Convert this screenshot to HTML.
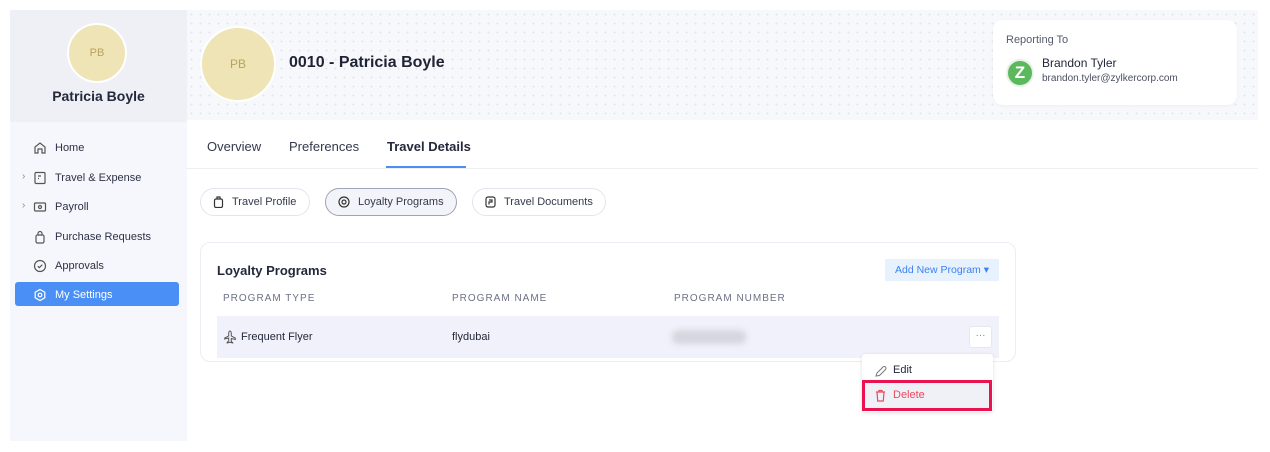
<!DOCTYPE html>
<html><head><meta charset="utf-8"><style>
*{box-sizing:border-box;margin:0;padding:0}
body{width:1270px;height:452px;background:#fff;font-family:"Liberation Sans",sans-serif;position:relative;overflow:hidden;color:#23283a}
.a{position:absolute}
.side{left:10px;top:10px;width:177px;height:431px;background:#f6f7fc}
.shead{left:10px;top:10px;width:177px;height:112px;background:#eff0f6}
.hdr{left:187px;top:10px;width:1071px;height:110px;background-color:#f7f8fb;background-image:radial-gradient(#e3e5ec 0.8px,transparent 1px);background-size:9px 9px}
.av{border-radius:50%;background:#efe4b6;border:2px solid #fff;color:#b9a35c;display:flex;align-items:center;justify-content:center;font-size:11px}
.nav{left:33px;font-size:11px;color:#2c3145;display:flex;align-items:center;gap:8px}
.nav svg{width:14px;height:14px}
.chev{left:22px;font-size:10px;color:#888}
.tab{top:139px;font-size:13px;color:#333a4d}
.chip{top:188px;height:28px;border:1px solid #e3e5ee;border-radius:14px;display:flex;align-items:center;padding-left:12px;gap:8px;font-size:11px;color:#333a4d;background:#fff}
.th{top:293px;font-size:10px;letter-spacing:1px;color:#6b7085}
</style></head><body>
<div class="a side"></div><div class="a shead"></div>
<div class="a av" style="left:67px;top:23px;width:60px;height:60px">PB</div>
<div class="a" style="left:10px;width:177px;top:88px;text-align:center;font-size:14px;font-weight:bold;color:#23283a">Patricia Boyle</div>
<div class="a nav" style="top:141px"><svg viewBox="0 0 14 14" fill="none" stroke="#555" stroke-width="1.2"><path d="M2 12V6l5-4 5 4v6H9V8H5v4z"/></svg>Home</div>
<div class="a chev" style="top:171px">›</div>
<div class="a nav" style="top:171px"><svg viewBox="0 0 14 14" fill="none" stroke="#555" stroke-width="1.2"><rect x="2" y="1.5" width="10" height="11" rx="1"/><path d="M5 5h3M5 7.5h1"/></svg>Travel &amp; Expense</div>
<div class="a chev" style="top:200px">›</div>
<div class="a nav" style="top:200px"><svg viewBox="0 0 14 14" fill="none" stroke="#555" stroke-width="1.2"><rect x="1.5" y="3" width="11" height="8" rx="1"/><circle cx="7" cy="7" r="1.5"/></svg>Payroll</div>
<div class="a nav" style="top:230px"><svg viewBox="0 0 14 14" fill="none" stroke="#555" stroke-width="1.2"><rect x="3" y="5" width="8" height="8" rx="1.5"/><path d="M5 5V3.5a2 2 0 0 1 4 0V5"/></svg>Purchase Requests</div>
<div class="a nav" style="top:259px"><svg viewBox="0 0 14 14" fill="none" stroke="#555" stroke-width="1.2"><circle cx="7" cy="7" r="5.5"/><path d="M4.8 7.2l1.5 1.5 3-3"/></svg>Approvals</div>
<div class="a" style="left:15px;top:282px;width:164px;height:24px;background:#4a8ff5;border-radius:3px"></div>
<div class="a nav" style="top:288px;color:#fff"><svg viewBox="0 0 14 14" fill="none" stroke="#fff" stroke-width="1.2"><path d="M7 1.5l4.8 2.75v5.5L7 12.5 2.2 9.75v-5.5z"/><circle cx="7" cy="7" r="1.8"/></svg>My Settings</div>

<div class="a hdr"></div>
<div class="a av" style="left:200px;top:26px;width:76px;height:76px;font-size:12px">PB</div>
<div class="a" style="left:289px;top:54px;font-size:16px;font-weight:bold;color:#1f2333">0010 - Patricia Boyle</div>
<div class="a" style="left:993px;top:20px;width:244px;height:85px;background:#fff;border-radius:10px;box-shadow:0 1px 3px rgba(0,0,0,.04)"></div>
<div class="a" style="left:1006px;top:34px;font-size:11px;color:#555b6e">Reporting To</div>
<div class="a" style="left:1006px;top:59px;width:28px;height:28px;border-radius:50%;background:#5cb85c;border:2px solid #e9f0e9;color:#fff;font-weight:bold;font-size:17px;display:flex;align-items:center;justify-content:center">Z</div>
<div class="a" style="left:1042px;top:56px;font-size:12px;color:#23283a">Brandon Tyler</div>
<div class="a" style="left:1042px;top:73px;font-size:10px;color:#4a4f60">brandon.tyler@zylkercorp.com</div>

<div class="a" style="left:187px;top:168px;width:1071px;height:1px;background:#edeef2"></div>
<div class="a tab" style="left:207px">Overview</div>
<div class="a tab" style="left:289px">Preferences</div>
<div class="a tab" style="left:387px;font-weight:bold;color:#23283a">Travel Details</div>
<div class="a" style="left:386px;top:166px;width:80px;height:2px;background:#4a8ff5"></div>

<div class="a chip" style="left:200px;width:110px"><svg width="11" height="12" viewBox="0 0 11 12" fill="none" stroke="#333" stroke-width="1.2"><rect x="1.5" y="3" width="8" height="8.5" rx="1.5"/><path d="M4 3V1h3v2"/></svg>Travel Profile</div>
<div class="a chip" style="left:325px;width:132px;background:#f3f4f9;border-color:#9ea3b5"><svg width="12" height="12" viewBox="0 0 12 12" fill="none" stroke="#333" stroke-width="1.2"><circle cx="6" cy="6" r="5"/><circle cx="6" cy="6" r="2"/></svg>Loyalty Programs</div>
<div class="a chip" style="left:472px;width:134px"><svg width="11" height="12" viewBox="0 0 11 12" fill="none" stroke="#333" stroke-width="1.2"><rect x="1" y="1" width="9" height="10" rx="2"/><path d="M4 4h3v2H4v2.5"/></svg>Travel Documents</div>

<div class="a" style="left:200px;top:242px;width:816px;height:120px;border:1px solid #eceef3;border-radius:10px;background:#fff"></div>
<div class="a" style="left:217px;top:263px;font-size:13px;font-weight:bold;color:#23283a">Loyalty Programs</div>
<div class="a" style="left:885px;top:259px;width:114px;height:22px;background:#e8f1fe;color:#3b82f0;font-size:10.5px;display:flex;align-items:center;justify-content:center">Add New Program ▾</div>
<div class="a th" style="left:223px">PROGRAM TYPE</div>
<div class="a th" style="left:452px">PROGRAM NAME</div>
<div class="a th" style="left:674px">PROGRAM NUMBER</div>
<div class="a" style="left:217px;top:316px;width:782px;height:42px;background:#f0f1fa"></div>
<div class="a" style="left:224px;top:330px"><svg width="12" height="14" viewBox="0 0 12 14" fill="none" stroke="#555" stroke-width="1"><path d="M6 1c1 0 1.3 1.5 1.3 3v2l4 2v1.5l-4-1v3l1.5 1.2V13L6 12.3 3.2 13v-.8l1.5-1.2v-3l-4 1V8l4-2V4C4.7 2.5 5 1 6 1z"/></svg></div>
<div class="a" style="left:241px;top:331px;font-size:11px;color:#23283a">Frequent Flyer</div>
<div class="a" style="left:452px;top:331px;font-size:11px;color:#23283a">flydubai</div>
<div class="a" style="left:672px;top:330px;width:74px;height:14px;background:#d5d7de;border-radius:6px;filter:blur(3px)"></div>
<div class="a" style="left:969px;top:326px;width:23px;height:22px;background:#fff;border:1px solid #e6e8ef;border-radius:3px;color:#4a8ff5;font-size:10px;text-align:center;line-height:18px">···</div>

<div class="a" style="left:862px;top:354px;width:131px;height:58px;background:#fff;box-shadow:0 1px 4px rgba(0,0,0,.12);border-radius:3px"></div>
<div class="a" style="left:874px;top:364px"><svg width="14" height="14" viewBox="0 0 14 14" fill="none" stroke="#777" stroke-width="1"><path d="M2 12l1-3 6-6a1.6 1.6 0 0 1 2.5 2.5l-6 6z"/></svg></div>
<div class="a" style="left:893px;top:364px;font-size:11px;color:#23283a">Edit</div>
<div class="a" style="left:862px;top:380px;width:130px;height:31px;border:3px solid #e8134f;background:#f0f1f6"></div>
<div class="a" style="left:875px;top:389px"><svg width="11" height="13" viewBox="0 0 11 13" fill="none" stroke="#e84a5f" stroke-width="1.2"><path d="M1 3h9M4 3V1.5h3V3M2 3l.7 9h5.6L9 3"/></svg></div>
<div class="a" style="left:893px;top:389px;font-size:11px;color:#e84a5f">Delete</div>
</body></html>
